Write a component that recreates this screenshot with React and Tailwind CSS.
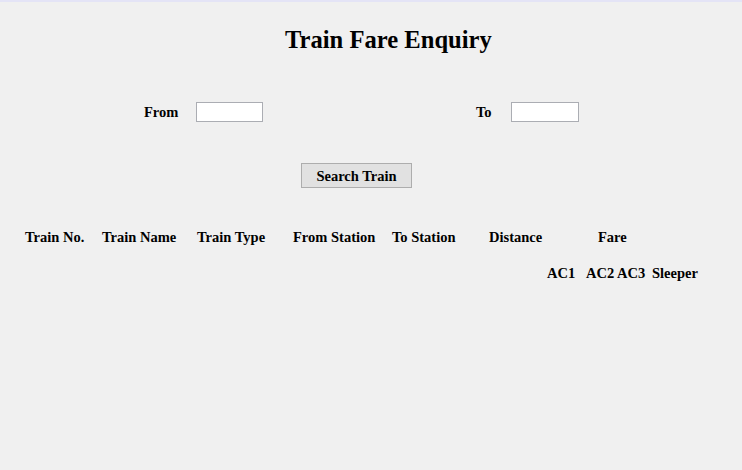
import React from 'react';

const serif = { fontFamily: '"Liberation Serif", "Times New Roman", serif' };

const headers = [
  { label: 'Train No.', w: 'w-[77px]' },
  { label: 'Train Name', w: 'w-[95px]' },
  { label: 'Train Type', w: 'w-[96px]' },
  { label: 'From Station', w: 'w-[99px]' },
  { label: 'To Station', w: 'w-[97px]' },
  { label: 'Distance', w: 'w-[109px]' },
  { label: 'Fare', w: 'w-[60px]' },
];

const fares = [
  { label: 'AC1', w: 'w-[39px]' },
  { label: 'AC2', w: 'w-[31px]' },
  { label: 'AC3', w: 'w-[35px]' },
  { label: 'Sleeper', w: 'w-[60px]' },
];

export default function App() {
  return (
    <div
      className="w-[742px] h-[470px] bg-[#f0f0f0] border-t-2 border-[#e4e4f6] text-black font-bold flex flex-col overflow-hidden"
      style={serif}
    >
      {/* Title */}
      <h1 className="mt-[26px] pl-[285px] text-[24.6px] leading-[24px] font-bold">
        Train Fare Enquiry
      </h1>

      {/* From / To */}
      <div className="mt-[50px] flex items-center h-[20px] text-[14.5px] leading-[20px]">
        <span className="ml-[144px] w-[52px]">From</span>
        <input type="text" className="w-[67px] h-[20px] bg-white border border-[#abadb3] outline-none" />
        <span className="ml-[213px] w-[35px]">To</span>
        <input type="text" className="w-[68px] h-[20px] bg-white border border-[#abadb3] outline-none" />
      </div>

      {/* Search button */}
      <div className="mt-[41px] pl-[301px]">
        <button className="w-[111px] h-[25px] bg-[#e1e1e1] border border-[#adadad] text-[14.5px] leading-[20px] font-bold flex items-center justify-center">
          Search Train
        </button>
      </div>

      {/* Table header */}
      <div className="mt-[39px] pl-[25px] flex text-[14.5px] leading-[20px] whitespace-nowrap">
        {headers.map((h) => (
          <span key={h.label} className={h.w}>{h.label}</span>
        ))}
      </div>

      {/* Fare classes */}
      <div className="mt-[16px] pl-[547px] flex text-[14.5px] leading-[20px] whitespace-nowrap">
        {fares.map((f) => (
          <span key={f.label} className={f.w}>{f.label}</span>
        ))}
      </div>
    </div>
  );
}
